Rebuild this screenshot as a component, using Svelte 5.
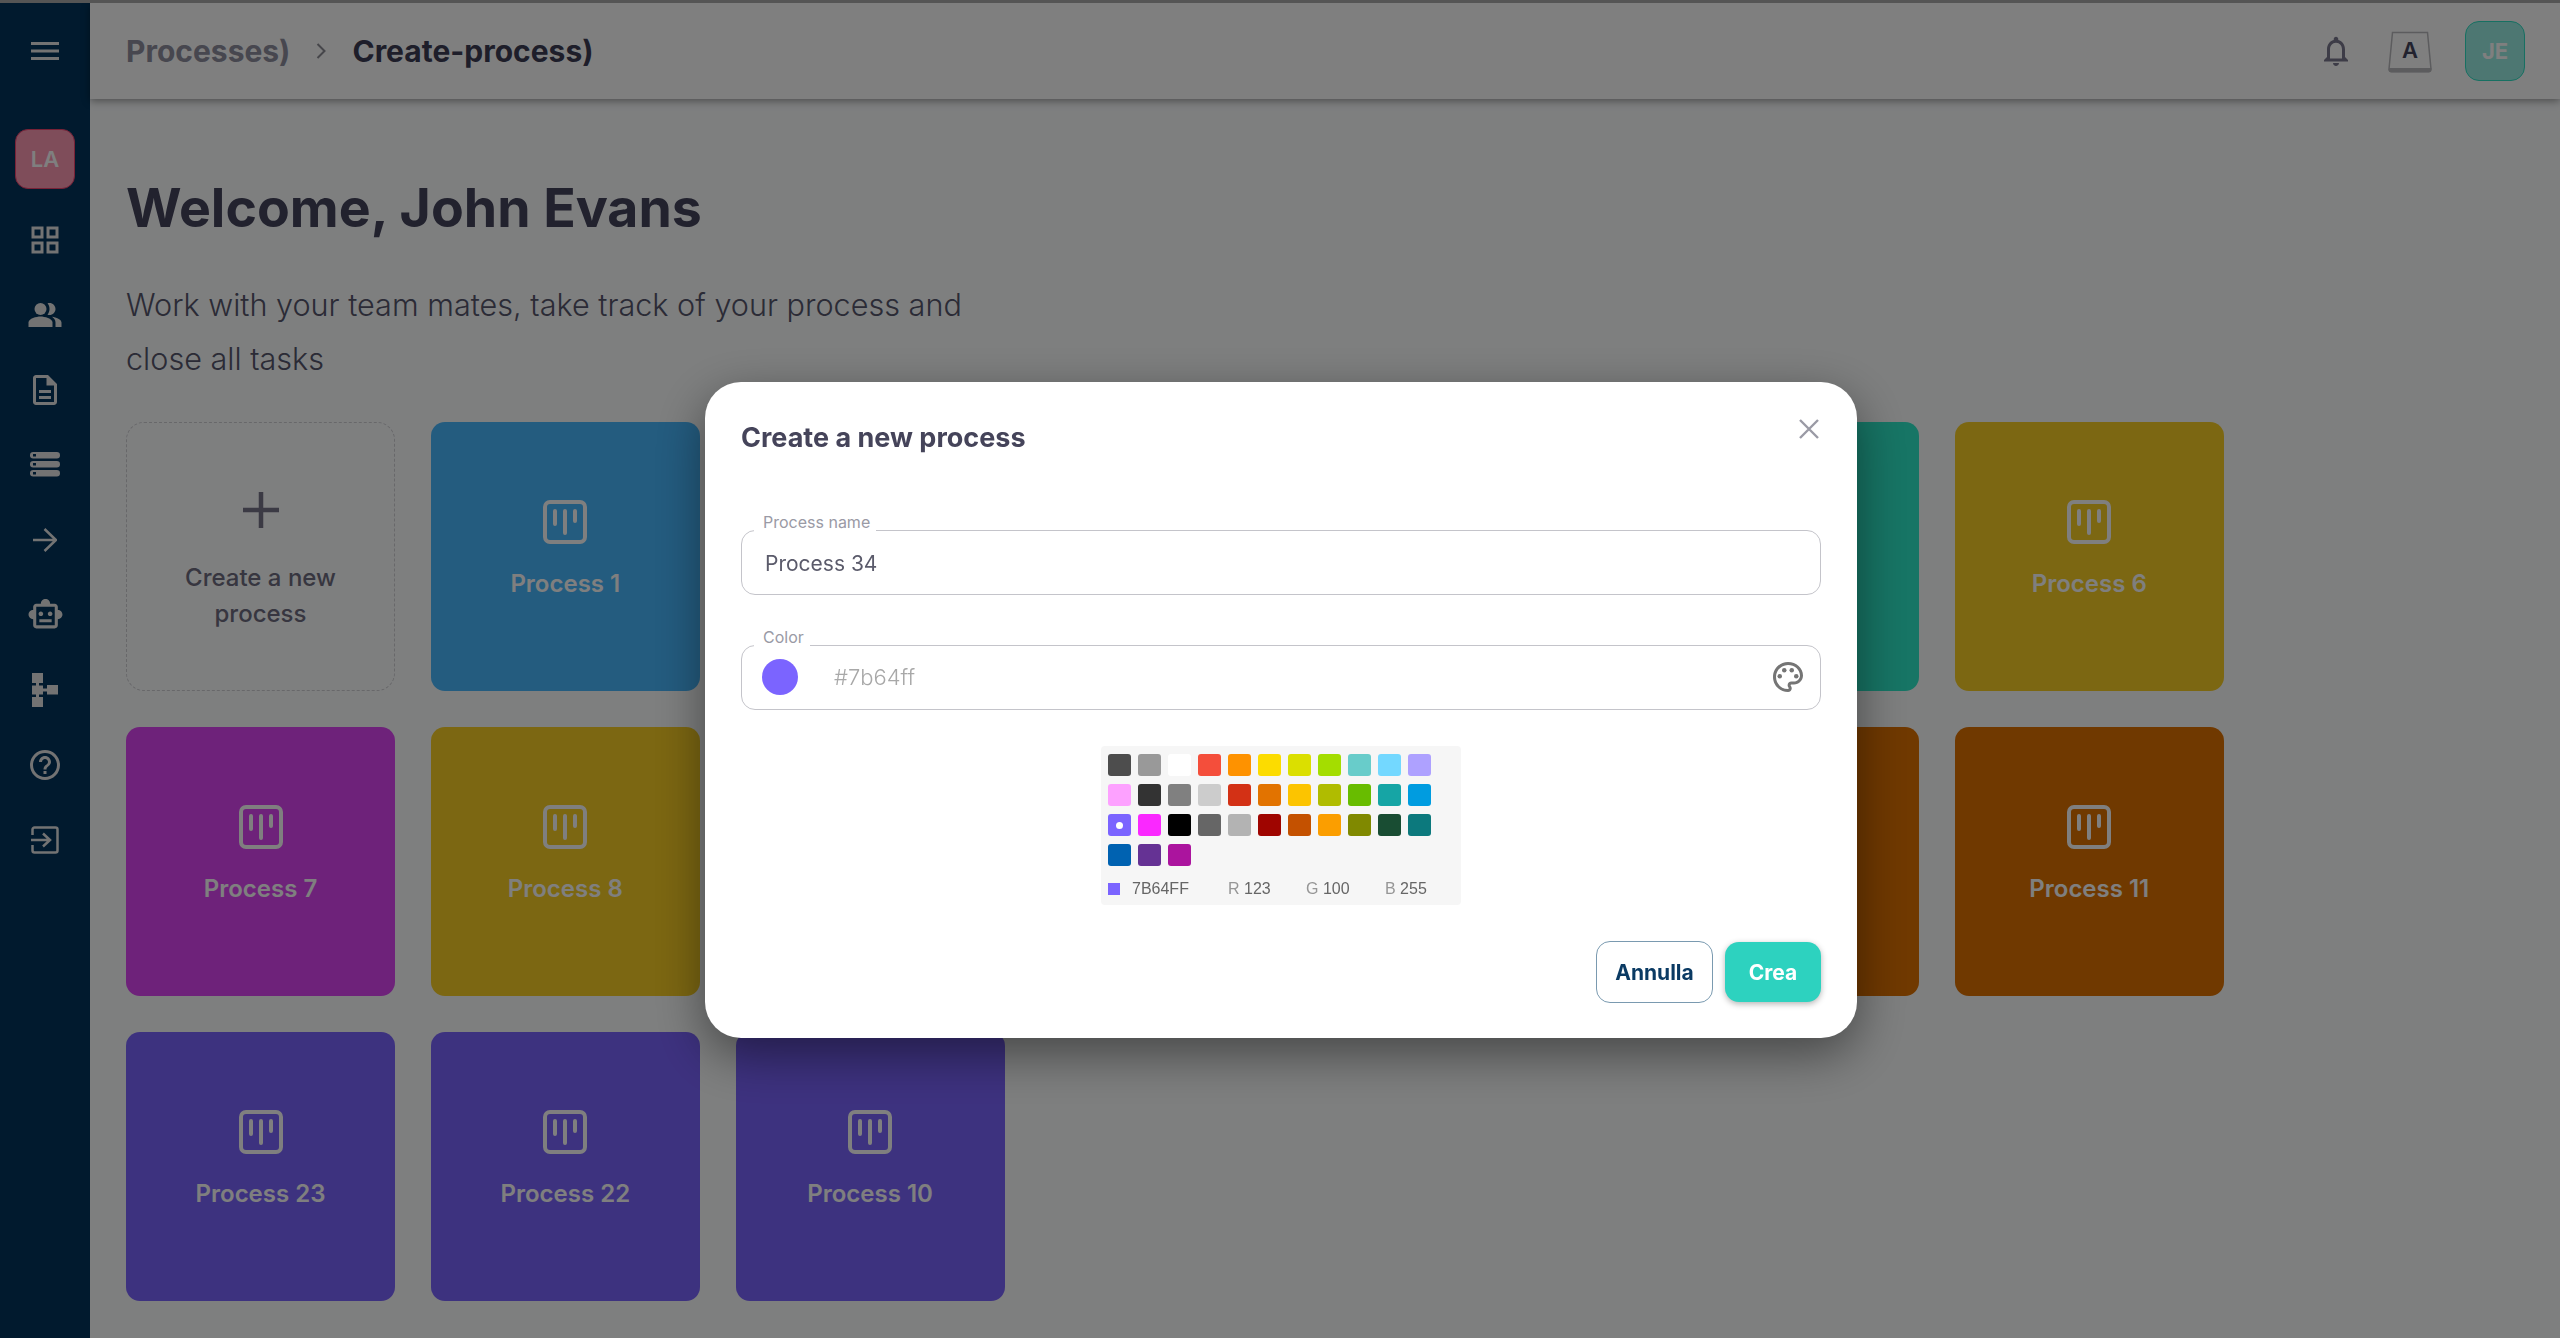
<script>
	// cards behind the dialog have no visible label, so they carry no name
	const cards = [
		{ id: 1, name: 'Process 1', color: '#48b8fe' },
		{ id: 2, name: '', color: '#48b8fe' },
		{ id: 3, name: '', color: '#e07200' },
		{ id: 4, name: '', color: '#7b64ff' },
		{ id: 5, name: '', color: '#2eeaca' },
		{ id: 6, name: 'Process 6', color: '#f8ce24' },
		{ id: 7, name: 'Process 7', color: '#dc44f4' },
		{ id: 8, name: 'Process 8', color: '#f8ce24' },
		{ id: 9, name: '', color: '#48b8fe' },
		{ id: 12, name: '', color: '#2eeaca' },
		{ id: 13, name: '', color: '#f8ce24' },
		{ id: 14, name: '', color: '#e07200' },
		{ id: 11, name: 'Process 11', color: '#e07200' },
		{ id: 23, name: 'Process 23', color: '#7b64ff' },
		{ id: 22, name: 'Process 22', color: '#7b64ff' },
		{ id: 10, name: 'Process 10', color: '#7b64ff' }
	];

	const swatches = [
		'#4D4D4D', '#999999', '#FFFFFF', '#F44E3B', '#FE9200', '#FCDC00', '#DBDF00', '#A4DD00', '#68CCCA', '#73D8FF', '#AEA1FF',
		'#FDA1FF', '#333333', '#808080', '#CCCCCC', '#D33115', '#E27300', '#FCC400', '#B0BC00', '#68BC00', '#16A5A5', '#009CE0',
		'#7B64FF', '#FA28FF', '#000000', '#666666', '#B3B3B3', '#9F0500', '#C45100', '#FB9E00', '#808900', '#194D33', '#0C797D',
		'#0062B1', '#653294', '#AB149E'
	];
	const selected = '#7B64FF';
</script>

<div class="shell">
	<aside class="sidebar">
		<button class="menu" aria-label="Menu">
			<svg width="28" height="18" viewBox="0 0 28 18"><path d="M0 1.5h28M0 9h28M0 16.5h28" stroke="currentColor" stroke-width="3" /></svg>
		</button>
		<div class="org">LA</div>
		<nav class="nav">
			<span class="slot"><svg width="36" height="36" viewBox="0 0 24 24"><path fill="currentColor" d="M3 3v8h8V3H3zm6 6H5V5h4v4zm-6 4v8h8v-8H3zm6 6H5v-4h4v4zm4-16v8h8V3h-8zm6 6h-4V5h4v4zm-6 4v8h8v-8h-8zm6 6h-4v-4h4v4z" /></svg></span>
			<span class="slot"><svg width="36" height="36" viewBox="0 0 24 24" fill="currentColor"><path d="M16.67 13.13C18.04 14.06 19 15.32 19 17v3h4v-3c0-2.18-3.57-3.47-6.33-3.87z" /><circle cx="9" cy="8" r="4" /><path d="M15 12c2.21 0 4-1.79 4-4s-1.79-4-4-4c-.47 0-.91.1-1.33.24C14.5 5.27 15 6.58 15 8s-.5 2.73-1.33 3.76c.42.14.86.24 1.33.24z" /><path d="M9 13c-2.67 0-8 1.34-8 4v3h16v-3c0-2.66-5.33-4-8-4z" /></svg></span>
			<span class="slot"><svg width="36" height="36" viewBox="0 0 24 24"><path fill="currentColor" d="M8 16h8v2H8zm0-4h8v2H8zm6-10H6c-1.1 0-2 .9-2 2v16c0 1.1.89 2 1.99 2H18c1.1 0 2-.9 2-2V8l-6-6zm4 18H6V4h7v5h5v11z" /></svg></span>
			<span class="slot">
				<svg width="30" height="25" viewBox="0 0 30 25">
					<rect y="0" width="30" height="6.5" rx="3.2" fill="currentColor" />
					<rect y="9" width="30" height="6.5" rx="3.2" fill="currentColor" />
					<rect y="18" width="30" height="6.5" rx="3.2" fill="currentColor" />
					<path d="M3 2h3v2.5H3zM3 11h3v2.5H3zM3 20h3v2.5H3z" fill="#02345c" />
				</svg>
			</span>
			<span class="slot"><svg width="24" height="24" viewBox="0 0 24 24" fill="none" stroke="currentColor" stroke-width="2.5"><path d="M0 12h22M11.5 1 23 12 11.5 23" /></svg></span>
			<span class="slot"><svg width="37" height="37" viewBox="0 0 24 24"><path fill="currentColor" d="M20 9V7c0-1.1-.9-2-2-2h-3c0-1.66-1.34-3-3-3S9 3.34 9 5H6c-1.1 0-2 .9-2 2v2c-1.66 0-3 1.34-3 3s1.34 3 3 3v4c0 1.1.9 2 2 2h12c1.1 0 2-.9 2-2v-4c1.66 0 3-1.34 3-3s-1.34-3-3-3zm-2 10H6V7h12v12zm-9-6c-.83 0-1.5-.67-1.5-1.5S8.17 10 9 10s1.5.67 1.5 1.5S9.83 13 9 13zm7.5-1.5c0 .83-.67 1.5-1.5 1.5s-1.5-.67-1.5-1.5.67-1.5 1.5-1.5 1.5.67 1.5 1.5zM8 15h8v2H8v-2z" /></svg></span>
			<span class="slot">
				<svg width="26" height="34" viewBox="0 0 26 34" fill="currentColor">
					<rect width="11" height="10" />
					<rect y="24" width="11" height="10" />
					<rect y="12.5" width="11" height="9" />
					<rect x="15" y="12" width="11" height="9.5" />
					<rect x="4" width="3" height="34" />
					<rect x="10" y="15.5" width="6" height="3" />
				</svg>
			</span>
			<span class="slot"><svg width="36" height="36" viewBox="0 0 24 24"><path fill="currentColor" d="M11 18h2v-2h-2v2zm1-16C6.48 2 2 6.48 2 12s4.48 10 10 10 10-4.48 10-10S17.52 2 12 2zm0 18c-4.41 0-8-3.59-8-8s3.59-8 8-8 8 3.59 8 8-3.59 8-8 8zm0-14c-2.21 0-4 1.79-4 4h2c0-1.1.9-2 2-2s2 .9 2 2c0 2-3 1.75-3 5h2c0-2.25 3-2.5 3-5 0-2.21-1.79-4-4-4z" /></svg></span>
			<span class="slot">
				<svg width="28" height="28" viewBox="0 0 28 28" fill="none" stroke="currentColor" stroke-width="2.5">
					<path d="M1.5 9V3.5a2 2 0 0 1 2-2h21a2 2 0 0 1 2 2v21a2 2 0 0 1-2 2h-21a2 2 0 0 1-2-2V19" />
					<path d="M0 14h18M12 7.5l7 6.5-7 6.5" />
				</svg>
			</span>
		</nav>
	</aside>

	<div class="main">
		<header class="topbar">
			<div class="crumbs">
				<span class="crumb">Processes)</span>
				<svg width="10" height="18" viewBox="0 0 10 18" fill="none" stroke="#8c8c94" stroke-width="2"><path d="M1.5 2l7 7-7 7" /></svg>
				<span class="crumb current">Create-process)</span>
			</div>
			<div class="actions">
				<svg class="bell" width="36" height="36" viewBox="0 0 24 24"><path fill="currentColor" d="M12 22c1.1 0 2-.9 2-2h-4c0 1.1.9 2 2 2zm6-6v-5c0-3.07-1.63-5.64-4.5-6.32V4c0-.83-.67-1.5-1.5-1.5s-1.5.67-1.5 1.5v.68C7.64 5.36 6 7.92 6 11v5l-2 2v1h16v-1l-2-2zm-2 1H8v-6c0-2.48 1.51-4.5 4-4.5s4 2.02 4 4.5v6z" /></svg>
				<svg class="key" width="44" height="42" viewBox="0 0 44 42">
					<path d="M4.5 1.5h35l3.5 36.5a2 2 0 0 1-2 2.5H3a2 2 0 0 1-2-2.5z" fill="#ffffff" stroke="#b9b9bd" stroke-width="1.5" />
					<path d="M1 37h42v2a2.5 2.5 0 0 1-2.5 2.5h-37A2.5 2.5 0 0 1 1 39z" fill="#b9b9bd" />
					<text x="22" y="27" text-anchor="middle">A</text>
				</svg>
				<div class="avatar">JE</div>
			</div>
		</header>

		<section class="content">
			<h1>Welcome, John Evans</h1>
			<p class="intro">Work with your team mates, take track of your process and close all tasks</p>

			<div class="grid">
				<div class="card new">
					<svg width="36" height="36" viewBox="0 0 36 36"><path d="M18 0v36M0 18h36" stroke="#767488" stroke-width="4.5" /></svg>
					<span>Create a new process</span>
				</div>
				{#each cards as card (card.id)}
					<div class="card" style="background: {card.color}">
						{#if card.name}
							<svg width="44" height="44" viewBox="0 0 44 44" fill="none" stroke="#fff" stroke-width="4" stroke-linecap="round">
								<rect x="2" y="2" width="40" height="40" rx="5" />
								<path d="M12 11v13M22 11v22M32 11v10" />
							</svg>
							<span>{card.name}</span>
						{/if}
					</div>
				{/each}
			</div>
		</section>
	</div>

	<div class="overlay">
		<div class="modal">
			<div class="modal-head">
				<h2>Create a new process</h2>
				<button class="close" aria-label="Close">
					<svg width="20" height="20" viewBox="0 0 20 20"><path d="M1 1l18 18M19 1 1 19" stroke="#9a9aa5" stroke-width="2.4" /></svg>
				</button>
			</div>

			<div class="field name">
				<label for="process-name">Process name</label>
				<input id="process-name" value="Process 34" />
			</div>

			<div class="field color">
				<label for="process-color">Color</label>
				<span class="dot"></span>
				<input id="process-color" placeholder="#7b64ff" />
				<svg width="36" height="36" viewBox="0 0 24 24" fill="#757575">
					<path d="M12 22C6.49 22 2 17.51 2 12S6.49 2 12 2s10 4.04 10 9c0 3.31-2.69 6-6 6h-1.77c-.28 0-.5.22-.5.5 0 .12.05.23.13.33.41.47.64 1.06.64 1.67 0 1.38-1.12 2.5-2.5 2.5zm0-18c-4.41 0-8 3.59-8 8s3.59 8 8 8c.28 0 .5-.22.5-.5 0-.16-.08-.28-.14-.35-.41-.46-.63-1.05-.63-1.65 0-1.38 1.12-2.5 2.5-2.5H16c2.21 0 4-1.79 4-4 0-3.86-3.59-7-8-7z" />
					<circle cx="6.5" cy="11.5" r="1.5" />
					<circle cx="9.5" cy="7.5" r="1.5" />
					<circle cx="14.5" cy="7.5" r="1.5" />
					<circle cx="17.5" cy="11.5" r="1.5" />
				</svg>
			</div>

			<div class="picker">
				<div class="swatches">
					{#each swatches as swatch (swatch)}
						<span class="swatch" style="background: {swatch}">
							{#if swatch === selected}<i></i>{/if}
						</span>
					{/each}
				</div>
				<div class="readout">
					<span class="chip"></span>
					<span class="hex">7B64FF</span>
					<span class="rgb r"><em>R</em> 123</span>
					<span class="rgb g"><em>G</em> 100</span>
					<span class="rgb b"><em>B</em> 255</span>
				</div>
			</div>

			<div class="buttons">
				<button class="btn cancel">Annulla</button>
				<button class="btn create">Crea</button>
			</div>
		</div>
	</div>
</div>

<style>
	:global(body) {
		background: #fcfeff;
		font-family: Inter, 'Noto Sans', sans-serif;
	}

	.shell {
		display: flex;
		height: 1335px;
		border-top: 3px solid #aaaaaa;
		overflow: hidden;
	}

	.sidebar {
		flex: 0 0 90px;
		display: flex;
		flex-direction: column;
		align-items: center;
		background: #02345c;
		color: #e6e6e6;
	}

	.menu {
		display: flex;
		align-items: center;
		justify-content: center;
		height: 96px;
		width: 100%;
		padding: 0;
		border: 0;
		background: none;
		color: inherit;
	}

	.org {
		display: flex;
		align-items: center;
		justify-content: center;
		width: 58px;
		height: 58px;
		margin-top: 30px;
		border: 1px solid #f0446f;
		border-radius: 13px;
		background: #ff9ab4;
		color: #fff;
		font-size: 22px;
		font-weight: 600;
	}

	.nav {
		display: flex;
		flex-direction: column;
		margin-top: 13px;
	}

	.slot {
		display: flex;
		align-items: center;
		justify-content: center;
		height: 75px;
	}

	.main {
		flex: 1;
		min-width: 0;
	}

	.topbar {
		display: flex;
		align-items: center;
		justify-content: space-between;
		height: 96px;
		padding: 0 35px 0 36px;
		background: #ffffff;
		box-shadow: 0 2px 8px rgba(0, 0, 0, 0.4);
	}

	.crumbs {
		display: flex;
		align-items: center;
		gap: 26px;
	}

	.crumb {
		font-size: 30px;
		font-weight: 700;
		color: #8e8e9e;
	}

	.crumb.current {
		color: #3c3c54;
	}

	.actions {
		display: flex;
		align-items: center;
	}

	.bell {
		color: #7a788e;
	}

	.key {
		margin: 2px 33px 0 34px;
	}

	.key text {
		font-family: Inter, sans-serif;
		font-size: 22px;
		font-weight: 600;
		fill: #44445c;
	}

	.avatar {
		display: flex;
		align-items: center;
		justify-content: center;
		width: 58px;
		height: 58px;
		border: 1px solid #2ee0c4;
		border-radius: 14px;
		background: #9aefe4;
		color: #fff;
		font-size: 22px;
		font-weight: 700;
	}

	.content {
		padding: 73px 36px 0;
	}

	h1 {
		margin: 0;
		font-size: 53.6px;
		line-height: 72px;
		font-weight: 700;
		color: #44445c;
	}

	.intro {
		width: 860px;
		margin: 34px 0 0;
		font-size: 30.6px;
		line-height: 54px;
		font-weight: 300;
		color: #56566c;
	}

	.grid {
		display: grid;
		grid-template-columns: repeat(7, 269px);
		grid-auto-rows: 269px;
		gap: 36px 35.8px;
		margin-top: 36px;
	}

	.card {
		display: flex;
		flex-direction: column;
		align-items: center;
		justify-content: center;
		gap: 25px;
		padding-bottom: 16px;
		border-radius: 14px;
		color: #fff;
		font-size: 24px;
		font-weight: 600;
		box-sizing: border-box;
	}

	.card.new {
		padding: 10px 40px 0;
		gap: 32px;
		border: 1px dashed #d0d0d4;
		border-radius: 18px;
		color: #6e6c80;
		font-weight: 500;
		line-height: 36px;
		text-align: center;
	}

	.overlay {
		position: fixed;
		inset: 0;
		display: flex;
		justify-content: center;
		align-items: flex-start;
		padding: 382px 0 0 2px;
		background: rgba(0, 0, 0, 0.5);
	}

	.modal {
		box-sizing: border-box;
		width: 1152px;
		height: 656px;
		padding: 0 36px;
		border-radius: 36px;
		background: #fff;
		box-shadow: 0 16px 50px rgba(0, 0, 0, 0.45);
	}

	.modal-head {
		display: flex;
		align-items: flex-start;
		justify-content: space-between;
		height: 148px;
	}

	h2 {
		margin: 36px 0 0;
		font-size: 27px;
		line-height: 40px;
		font-weight: 700;
		color: #45445a;
	}

	.close {
		margin: 37px 2px 0 0;
		padding: 0;
		border: 0;
		background: none;
		line-height: 0;
	}

	.field {
		position: relative;
		box-sizing: border-box;
		display: flex;
		align-items: center;
		height: 65px;
		border: 1.5px solid #c4c4ca;
		border-radius: 14px;
	}

	.field label {
		position: absolute;
		left: 12px;
		top: -19px;
		padding: 0 6px 3px 9px;
		background: #fff;
		font-size: 16px;
		line-height: 20px;
		color: #9a9aa5;
	}

	.field input {
		flex: 1;
		min-width: 0;
		padding: 0;
		border: 0;
		outline: 0;
		background: none;
		font-family: inherit;
		font-size: 21px;
		color: #5b5b6b;
	}

	.field.name {
		padding: 2px 0 0 23px;
	}

	.field.color {
		margin-top: 50px;
		padding: 0 14px 2px 20px;
	}

	.field.color input {
		font-size: 22px;
	}

	.field.color input::placeholder {
		color: #a8a8a8;
		opacity: 1;
		font-weight: 300;
	}

	.dot {
		flex: none;
		width: 36px;
		height: 36px;
		margin-right: 36px;
		border-radius: 50%;
		background: #7b64ff;
	}

	.picker {
		box-sizing: border-box;
		width: 360px;
		height: 159px;
		margin: 36px auto 0;
		padding: 8px 7px;
		border-radius: 4px;
		background: #f6f6f6;
	}

	.swatches {
		display: grid;
		grid-template-columns: repeat(11, 23px);
		grid-auto-rows: 22px;
		gap: 8px 7px;
	}

	.swatch {
		display: flex;
		align-items: center;
		justify-content: center;
		border-radius: 3px;
	}

	.swatch i {
		width: 7px;
		height: 7px;
		border-radius: 50%;
		background: #fff;
	}

	.readout {
		position: relative;
		height: 24px;
		margin-top: 11px;
		font-family: 'Liberation Sans', Arial, sans-serif;
		font-size: 16px;
		line-height: 24px;
		color: #666;
	}

	.chip {
		position: absolute;
		left: 0;
		top: 6px;
		width: 12px;
		height: 12px;
		background: #7b64ff;
	}

	.hex,
	.rgb {
		position: absolute;
		top: 0;
	}

	.hex {
		left: 24px;
	}

	.rgb em {
		font-style: normal;
		color: #969696;
	}

	.r {
		left: 120px;
	}

	.g {
		left: 198px;
	}

	.b {
		left: 277px;
	}

	.buttons {
		display: flex;
		justify-content: flex-end;
		align-items: center;
		gap: 12px;
		margin-top: 36px;
	}

	.btn {
		height: 60px;
		padding: 0;
		border-radius: 14px;
		font-family: inherit;
		font-size: 21px;
		font-weight: 700;
	}

	.cancel {
		width: 117px;
		height: 62px;
		border: 1px solid #7a9ab0;
		background: #fff;
		color: #0a3a63;
	}

	.create {
		width: 96px;
		border: 0;
		background: #2dd2bf;
		color: #fff;
		box-shadow: 0 2px 6px rgba(0, 0, 0, 0.3);
	}
</style>
